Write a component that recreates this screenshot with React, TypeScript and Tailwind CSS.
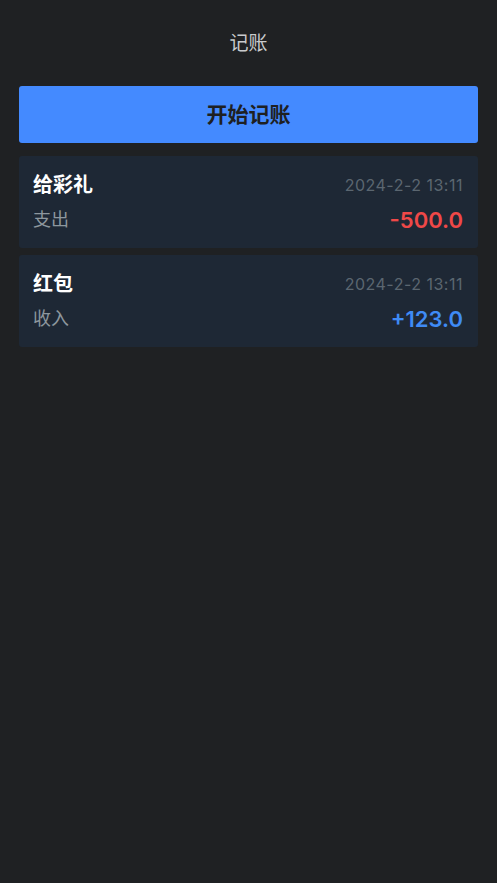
import React from "react";

interface Record {
    title: string;
    type: string;
    time: string;
    amount: string;
    income: boolean;
}

const records: Record[] = [
    { title: "给彩礼", type: "支出", time: "2024-2-2 13:11", amount: "-500.0", income: false },
    { title: "红包", type: "收入", time: "2024-2-2 13:11", amount: "+123.0", income: true },
];

const font = { fontFamily: 'Inter, "Noto Sans CJK SC", sans-serif' };

const RecordCard = ({ item }: { item: Record }) => (
    <div className="bg-[#1e2835] rounded-[3px] pl-[14px] pr-[15px] pt-[15px] pb-[14px] h-[92px] flex flex-col justify-between">
        <div className="flex items-center justify-between h-[28px]">
            <p className="text-[20px] font-bold text-white leading-none">{item.title}</p>
            <p className="text-[16px] tracking-[0.5px] text-[#5b6670] leading-none">{item.time}</p>
        </div>
        <div className="flex items-center justify-between h-[28px]">
            <p className="text-[18px] text-[#8d979e] leading-none">{item.type}</p>
            <p
                className={
                    item.income
                        ? "text-[22px] font-semibold text-[#3f8bf5] leading-none"
                        : "text-[22px] font-semibold text-[#f04848] leading-none"
                }
            >
                {item.amount}
            </p>
        </div>
    </div>
);

const App = () => {
    return (
        <div className="min-h-[883px] w-full bg-[#1f2123]" style={font}>
            <div className="h-[86px] flex items-start justify-center pt-[32px]">
                <h1 className="text-[19px] text-[#c9cbcd] leading-[24px]">记账</h1>
            </div>
            <div className="px-[19px] flex flex-col gap-[7px]">
                <button className="h-[57px] mb-[6px] w-full rounded-[3px] bg-[#448aff] text-[21px] font-bold text-[#1e2022]">
                    开始记账
                </button>
                {records.map((item, idx) => (
                    <RecordCard key={idx} item={item} />
                ))}
            </div>
        </div>
    );
};

export default App;
